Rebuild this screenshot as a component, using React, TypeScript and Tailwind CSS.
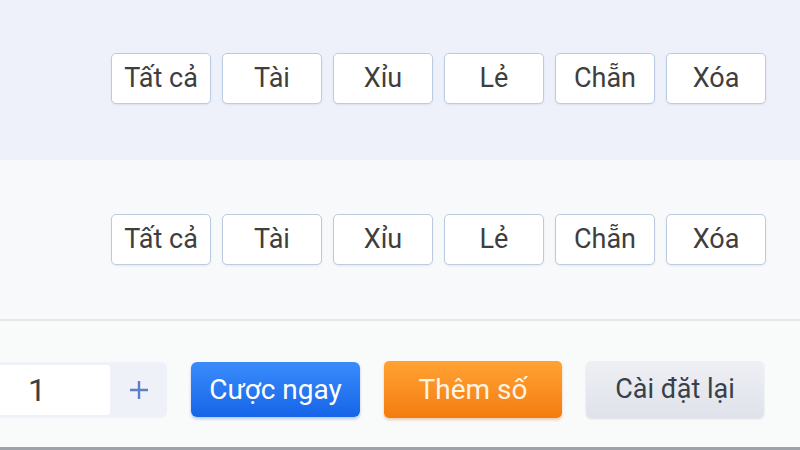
const choices = ["Tất cả", "Tài", "Xỉu", "Lẻ", "Chẵn", "Xóa"];

function ChoiceRow() {
  return (
    <div className="flex justify-end gap-[11px] pr-[34px]">
      {choices.map((c) => (
        <button
          key={c}
          className="flex h-[51px] w-[100px] items-center justify-center rounded-[5px] border border-[#bccbe2] bg-white text-[27px] leading-none text-[#3e3e3e] shadow-[0_1px_2px_rgba(120,140,180,0.15)]"
        >
          {c}
        </button>
      ))}
    </div>
  );
}

export default function App() {
  return (
    <div className="flex h-[450px] w-[800px] flex-col overflow-hidden bg-[#f9fafa] font-['Roboto','Liberation_Sans',sans-serif]">
      <div className="flex h-[160px] flex-col justify-center bg-[#eef1f9] pb-[3px]">
        <ChoiceRow />
      </div>
      <div className="flex h-[161px] flex-col justify-center border-b-2 border-[#e4e6ea] bg-[#f8f9fa]">
        <ChoiceRow />
      </div>
      <div className="flex flex-1 items-center justify-end gap-[24px] pr-[36px] pt-[11px]">
        <div className="flex h-[56px] w-[240px] shrink-0 items-center rounded-[6px] bg-[#eef1f8] py-[3px]">
          <div className="flex h-full flex-1 items-center rounded-r-[3px] bg-white pl-[101px] text-[32px] leading-none text-[#3e3e3e]">
            1
          </div>
          <div className="flex w-[57px] items-center justify-center text-[#5d7fc4]">
            <svg width="20" height="20" viewBox="0 0 20 20" fill="none" stroke="currentColor" strokeWidth="2.4">
              <path d="M10 1v18M1 10h18" />
            </svg>
          </div>
        </div>
        <button className="flex h-[55px] w-[169px] shrink-0 items-center justify-center rounded-[6px] bg-gradient-to-b from-[#3a8cfb] to-[#1664e8] text-[28px] leading-none text-white shadow-[0_2px_3px_rgba(30,90,200,0.3)]">
          Cược ngay
        </button>
        <button className="flex h-[57px] w-[178px] shrink-0 items-center justify-center rounded-[5px] bg-gradient-to-b from-[#ffa232] to-[#f47c0c] text-[28px] leading-none text-[#fff4e4] shadow-[0_2px_3px_rgba(200,100,20,0.3)]">
          Thêm số
        </button>
        <button className="flex h-[57px] w-[178px] shrink-0 items-center justify-center rounded-[5px] bg-gradient-to-b from-[#eef0f5] to-[#dfe2ea] text-[27px] leading-none text-[#3a3f4a] shadow-[0_1px_2px_rgba(100,110,130,0.2)]">
          Cài đặt lại
        </button>
      </div>
      <div className="h-[3px] bg-[#9ea3aa]" />
    </div>
  );
}
